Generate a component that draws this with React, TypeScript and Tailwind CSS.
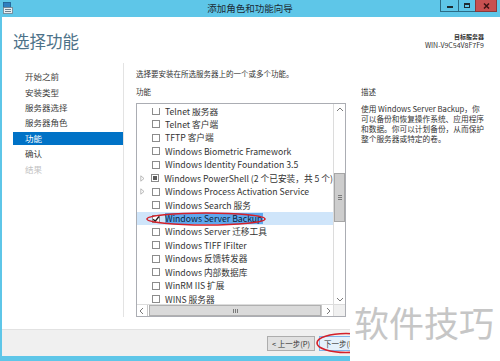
import React from "react";

const FONT = { fontFamily: '"Noto Sans CJK SC", "Noto Sans", sans-serif' };

type Row = { label: string; expander?: boolean; state?: "none" | "partial" | "checked"; selected?: boolean };

const rows: Row[] = [
  { label: "Telnet 服务器" },
  { label: "Telnet 客户端" },
  { label: "TFTP 客户端" },
  { label: "Windows Biometric Framework" },
  { label: "Windows Identity Foundation 3.5" },
  { label: "Windows PowerShell (2 个已安装，共 5 个)", expander: true, state: "partial" },
  { label: "Windows Process Activation Service", expander: true },
  { label: "Windows Search 服务" },
  { label: "Windows Server Backup", state: "checked", selected: true },
  { label: "Windows Server 迁移工具" },
  { label: "Windows TIFF IFilter" },
  { label: "Windows 反馈转发器" },
  { label: "Windows 内部数据库" },
  { label: "WinRM IIS 扩展" },
  { label: "WINS 服务器" },
];

const nav = ["开始之前", "安装类型", "服务器选择", "服务器角色", "功能", "确认", "结果"];

function Checkbox({ state }: { state?: Row["state"] }) {
  return (
    <div className="w-[8px] h-[8px] border border-[#8c8c8c] bg-white flex items-center justify-center shrink-0">
      {state === "partial" && <div className="w-[4px] h-[4px] bg-[#5c5c5c]" />}
      {state === "checked" && (
        <svg width="8" height="8" viewBox="0 0 8 8" className="shrink-0">
          <path d="M1.2 4.2 L3.2 6.2 L7 1.5" fill="none" stroke="#1a1a1a" strokeWidth="1.3" />
        </svg>
      )}
    </div>
  );
}

function Chevron({ dir }: { dir: "up" | "down" | "left" | "right" }) {
  const d =
    dir === "up" ? "M2 6 L5 3 L8 6" : dir === "down" ? "M2 4 L5 7 L8 4" : dir === "left" ? "M6 2 L3 5 L6 8" : "M4 2 L7 5 L4 8";
  return (
    <svg width="10" height="10" viewBox="0 0 10 10">
      <path d={d} fill="none" stroke="#7a7a7a" strokeWidth="1" />
    </svg>
  );
}

export default function App() {
  return (
    <div className="w-[500px] h-[361px] relative overflow-hidden bg-white text-[#262626]" style={FONT}>
      {/* Title bar */}
      <div className="h-[17px] bg-[#5ec6e8] flex items-start">
        <div className="w-[60px] h-[17px] pl-[3px] pt-[2px]">
          <svg width="10" height="12" viewBox="0 0 10 12">
            <rect x="0.5" y="0.5" width="7" height="5" fill="#2f7fc0" stroke="#1f5c8f" strokeWidth="0.8" />
            <rect x="0.5" y="5.5" width="9" height="6" fill="#e8eef2" stroke="#6e7f8c" strokeWidth="0.8" />
            <rect x="2" y="7" width="6" height="1" fill="#6e7f8c" />
            <rect x="2" y="9" width="6" height="1" fill="#6e7f8c" />
          </svg>
        </div>
        <div className="flex-1 h-[17px] flex items-center justify-center text-[9.5px] text-[#1b2a33]">添加角色和功能向导</div>
        <div className="w-[60px] h-[12px] flex">
          <div className="w-[18px] h-[12px] border-l border-b border-[#2c6c86] flex items-end justify-center pb-[3px]">
            <div className="w-[6px] h-[2px] bg-[#1e2a30]" />
          </div>
          <div className="w-[17px] h-[12px] border-l border-b border-[#2c6c86] flex items-center justify-center">
            <div className="w-[6px] h-[5px] border border-[#1e2a30] border-t-2" />
          </div>
          <div className="w-[22px] h-[12px] border-l border-r border-b border-[#8a3a3a] bg-[#c75050] flex items-center justify-center">
            <svg width="7" height="6" viewBox="0 0 7 6">
              <path d="M1 0.5 L6 5.5 M6 0.5 L1 5.5" stroke="#3a1212" strokeWidth="1.5" />
            </svg>
          </div>
        </div>
      </div>

      {/* Body */}
      <div className="h-[339px] border-l-2 border-[#5ec6e8] flex flex-col">
        <div className="h-[312px] bg-white flex flex-col">
          {/* Header */}
          <div className="h-[46px] flex justify-between">
            <div className="pl-[11px] pt-[14px] text-[16.5px] leading-[20px] text-[#4d7289]">选择功能</div>
            <div className="pr-[16px] pt-[16px] flex flex-col items-end">
              <div className="text-[6px] leading-[8px] text-[#333] font-bold">目标服务器</div>
              <div className="text-[7px] leading-[8px] text-[#333]">WIN-V9C54V8F7F9</div>
            </div>
          </div>

          <div className="flex flex-1">
            {/* Nav */}
            <div className="w-[122px] h-[254px] border-r border-[#e3e3e3] pt-[6px] pl-[11px]">
              {nav.map((n, i) => (
                <div key={n} className="h-[15.4px] flex items-center">
                  <div
                    className={
                      "w-full h-[13px] flex items-center pl-[12px] text-[8.5px] " +
                      (i === 4 ? "bg-[#0072c6] text-white" : i === 6 ? "text-[#c3c3c3]" : "text-[#3b3b3b]")
                    }
                  >
                    {n}
                  </div>
                </div>
              ))}
            </div>

            {/* Content */}
            <div className="flex-1 pl-[12px] pt-[5px] flex flex-col">
              <div className="h-[12px] flex items-center text-[7.5px] text-[#333]">选择要安装在所选服务器上的一个或多个功能。</div>
              <div className="flex mt-[6px]">
                <div className="w-[210px] flex flex-col">
                  <div className="h-[12px] flex items-center text-[7.5px] text-[#333]">功能</div>
                  <div className="mt-[5px] w-[210px] h-[214px] border border-[#abadb3] grid grid-cols-[196px_12px] grid-rows-[200px_12px]">
                    {/* viewport */}
                    <div className="pt-[4px] flex flex-col">
                      <div className="flex-1 overflow-hidden">
                        <div className="-mt-[3.7px]">
                          {rows.map((r) => (
                            <div
                              key={r.label}
                              className={
                                "h-[13.45px] flex items-center whitespace-nowrap " + (r.selected ? "bg-[#cfe5fa]" : "")
                              }
                            >
                              <div className="w-[15px] flex items-center pl-[3px]">
                                {r.expander && (
                                  <svg width="5" height="7" viewBox="0 0 5 7">
                                    <path d="M0.8 0.8 L4 3.5 L0.8 6.2 Z" fill="none" stroke="#a8a8a8" strokeWidth="0.8" />
                                  </svg>
                                )}
                              </div>
                              <Checkbox state={r.state} />
                              <span
                                className={
                                  "ml-[5px] text-[8.7px] leading-[11px] " +
                                  (r.selected ? "bg-[#5fa8ee] text-[#0c2238]" : "text-[#333]")
                                }
                              >
                                {r.label}
                              </span>
                            </div>
                          ))}
                        </div>
                      </div>
                    </div>
                    {/* vertical scrollbar */}
                    <div className="border-l border-[#dcdcdc] bg-white flex flex-col items-center">
                      <div className="h-[11px] flex items-center justify-center">
                        <Chevron dir="up" />
                      </div>
                      <div className="h-[58px]" />
                      <div className="w-[11px] h-[49px] bg-[#cdcdcd] border border-[#a6a6a6] flex flex-col items-center justify-center gap-[1px]">
                        <div className="w-[4px] h-[1px] bg-[#7a7a7a]" />
                        <div className="w-[4px] h-[1px] bg-[#7a7a7a]" />
                        <div className="w-[4px] h-[1px] bg-[#7a7a7a]" />
                      </div>
                      <div className="flex-1" />
                      <div className="h-[11px] flex items-center justify-center">
                        <Chevron dir="down" />
                      </div>
                    </div>
                    {/* horizontal scrollbar */}
                    <div className="flex bg-white border-t border-[#dcdcdc]">
                      <div className="w-[11px] h-[11px] border-r border-[#c8c8c8] flex items-center justify-center">
                        <Chevron dir="left" />
                      </div>
                      <div className="ml-[1px] w-[172px] h-[11px] bg-[#dadada] border border-[#b0b0b0] flex items-center justify-center gap-[1px]">
                        <div className="w-[1px] h-[4px] bg-[#7a7a7a]" />
                        <div className="w-[1px] h-[4px] bg-[#7a7a7a]" />
                        <div className="w-[1px] h-[4px] bg-[#7a7a7a]" />
                      </div>
                      <div className="flex-1 h-[11px] border-l border-[#c8c8c8] flex items-center justify-center">
                        <Chevron dir="right" />
                      </div>
                    </div>
                    <div className="bg-[#f0f0f0] border-t border-l border-[#dcdcdc]" />
                  </div>
                </div>

                {/* Description */}
                <div className="ml-[15px] flex flex-col">
                  <div className="h-[12px] flex items-center text-[7.5px] text-[#333]">描述</div>
                  <div className="mt-[6px] text-[7.7px] leading-[10px] text-[#333] whitespace-nowrap">
                    <div>使用 Windows Server Backup，你</div>
                    <div>可以备份和恢复操作系统、应用程序</div>
                    <div>和数据。你可以计划备份，从而保护</div>
                    <div>整个服务器或特定的卷。</div>
                  </div>
                </div>
              </div>
            </div>
          </div>
        </div>

        {/* Footer */}
        <div className="h-[27px] bg-[#f0f0f0] border-t border-[#e2e2e2] pt-[6px] pl-[265px] flex">
          <div className="w-[83px] h-[15px] overflow-hidden flex gap-[4px]">
            <div className="w-[48px] h-[15px] shrink-0 bg-[#e1e1e1] border border-[#adadad] flex items-center justify-center text-[7.5px] text-[#333]">
              &lt; 上一步(P)
            </div>
            <div className="w-[48px] h-[15px] shrink-0 bg-[#e5f1fb] border border-[#7eb4ea] flex items-center pl-[4px] text-[7.5px] text-[#333] whitespace-nowrap">
              下一步(N) &gt;
            </div>
          </div>
        </div>
      </div>
      <div className="h-[5px] bg-[#5ec6e8]" />

      {/* Red annotation ellipses */}
      <svg className="absolute left-0 top-0 pointer-events-none" width="500" height="361">
        <ellipse cx="206" cy="219" rx="59" ry="6" fill="none" stroke="#d3202a" strokeWidth="1.6" />
        <ellipse cx="346" cy="343" rx="29" ry="9.5" fill="none" stroke="#d3202a" strokeWidth="1.6" />
      </svg>

      {/* Watermark */}
      <div className="absolute left-[350px] top-[300px] w-[150px] h-[61px] bg-white pl-[4px] pt-[3px]">
        <div className="text-[35px] leading-[38px] text-[#c6c6c6] whitespace-nowrap">软件技巧</div>
      </div>
    </div>
  );
}
